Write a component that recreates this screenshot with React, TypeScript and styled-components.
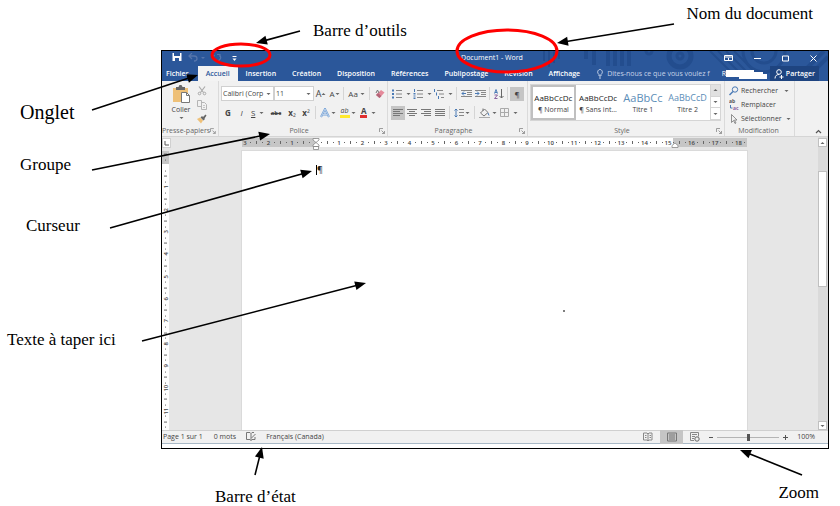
import React from "react";
import styled, { createGlobalStyle } from "styled-components";

const GlobalStyle = createGlobalStyle`
  *, *::before, *::after { box-sizing: border-box; }
  body { margin: 0; background: #fff; font-family: "Open Sans", "Noto Sans", sans-serif; font-size: 7px; line-height: 10px; color: #444; }
  button, select, input { font: inherit; color: inherit; margin: 0; }
`;

const Figure = styled.main`
  position: relative;
  display: grid;
  grid-template-columns: 161px minmax(0, 1fr) 11px;
  grid-template-rows: 50px minmax(0, 1fr) 57px;
  min-width: 840px;
  min-height: 100vh;
  font-family: "Liberation Serif", serif;
  font-size: 17px;
  line-height: 20px;
  color: #000;
`;

const TopLabels = styled.div`
  grid-column: 2;
  display: flex;
  justify-content: space-between;
  align-items: flex-start;
  padding: 4px 16px 0 152px;
`;

const SideLabels = styled.div`
  grid-column: 1;
  grid-row: 2;
  display: flex;
  flex-direction: column;
  align-items: flex-start;
  padding-top: 52px;
`;

const BottomLabels = styled.div`
  grid-column: 2;
  grid-row: 3;
  display: flex;
  align-items: flex-start;
  justify-content: space-between;
  padding: 34px 10px 0 54px;
`;

const Label = styled.span<{ $top?: number; $left?: number; $big?: boolean }>`
  margin-top: ${(p) => p.$top ?? 0}px;
  margin-left: ${(p) => p.$left ?? 0}px;
  font-size: ${(p) => (p.$big ? 20 : 17)}px;
  white-space: nowrap;
`;

const Overlay = styled.svg<{ $right?: boolean }>`
  position: absolute;
  top: 0;
  ${(p) => (p.$right ? "right: 0;" : "left: 0;")}
  pointer-events: none;
`;

const Window = styled.section`
  grid-column: 2;
  grid-row: 2;
  display: flex;
  flex-direction: column;
  border: 1px solid #000;
  padding-bottom: 4px;
  background: #fff;
  font-family: "Open Sans", "Noto Sans", sans-serif;
  font-size: 7px;
  line-height: 10px;
  color: #444;
`;

const Head = styled.header`
  position: relative;
  background: #2b579a;
  color: #fff;
`;

const Pattern = styled.svg`
  position: absolute;
  top: 0;
  right: 0;
`;

const TitleBar = styled.div`
  position: relative;
  display: grid;
  grid-template-columns: 1fr auto 1fr;
  height: 15px;
`;

const TitleSide = styled.div<{ $end?: boolean }>`
  display: flex;
  justify-content: ${(p) => (p.$end ? "flex-end" : "flex-start")};
  padding: ${(p) => (p.$end ? "0 1px 0 0" : "0 0 0 9px")};
`;

const Title = styled.h1`
  margin: 0;
  padding: 2px 6px 0 0;
  font-size: 7px;
  line-height: 10px;
  font-weight: 400;
`;

const IconButton = styled.button<{ $w: number; $on?: boolean }>`
  display: flex;
  align-items: center;
  justify-content: center;
  flex: none;
  width: ${(p) => p.$w}px;
  height: 14px;
  padding: 0;
  border: 0;
  background: ${(p) => (p.$on ? "#c5c5c5" : "transparent")};
  white-space: nowrap;
`;

const Tabs = styled.nav`
  position: relative;
  display: flex;
  height: 15px;
  padding-right: 9px;
`;

const Tab = styled.button<{ $active?: boolean; $first?: boolean }>`
  border: 0;
  padding: ${(p) => (p.$first ? "0 9px 0 4px" : "0 8px")};
  background: ${(p) => (p.$active ? "#f3f3f3" : "transparent")};
  color: ${(p) => (p.$active ? "#2b579a" : "#fff")};
  font-weight: 600;
  white-space: nowrap;
`;

const Search = styled.label`
  display: flex;
  align-items: center;
  gap: 4px;
  flex: 1;
  margin-left: 9px;
  min-width: 0;
`;

const SearchInput = styled.input`
  flex: 1;
  min-width: 0;
  padding: 0;
  border: 0;
  background: transparent;
  &::placeholder { color: #c6d3e8; opacity: 1; }
`;

const Account = styled.span`
  display: flex;
  align-items: center;
  flex: none;
  width: 48px;
`;

const Share = styled.button`
  display: flex;
  align-items: center;
  gap: 2px;
  padding: 0 4px;
  border: 0;
  background: #1e4480;
  font-weight: 600;
`;

const Ribbon = styled.div`
  display: flex;
  height: 56px;
  background: #f1f1f1;
  border-bottom: 1px solid #d5d5d5;
`;

const Group = styled.section<{ $w?: number }>`
  display: flex;
  flex-direction: column;
  justify-content: space-between;
  ${(p) => (p.$w ? `flex: none; width: ${p.$w}px;` : "flex: 1; min-width: 0;")}
  border-right: 1px solid #dadada;
  padding-top: 3px;
`;

const GroupFoot = styled.footer`
  display: flex;
  align-items: center;
  height: 10px;
  padding-right: 2px;
  color: #666;
`;

const GroupName = styled.span`
  flex: 1;
  text-align: center;
  white-space: nowrap;
`;

const Clip = styled.div`
  display: flex;
  padding-left: 6px;
`;

const Paste = styled.button`
  display: flex;
  flex-direction: column;
  align-items: center;
  gap: 1px;
  width: 26px;
  padding: 0;
  border: 0;
  background: transparent;
`;

const Column = styled.div`
  display: flex;
  flex-direction: column;
`;

const Tools = styled.div<{ $pad: number }>`
  display: flex;
  flex-direction: column;
  gap: 4px;
  padding: 2px 0 0 ${(p) => p.$pad}px;
`;

const ToolRow = styled.div`
  display: flex;
  align-items: center;
  height: 15px;
`;

const Divider = styled.i`
  flex: none;
  width: 1px;
  height: 13px;
  margin: 0 2px;
  background: #d5d5d5;
`;

const SelectBox = styled.span<{ $w: number }>`
  display: flex;
  align-items: center;
  flex: none;
  width: ${(p) => p.$w}px;
  height: 15px;
  padding-right: 2px;
  border: 1px solid #d0d0d0;
  background: #fff;
`;

const Select = styled.select`
  appearance: none;
  flex: 1;
  min-width: 0;
  height: 13px;
  padding: 0 0 0 1px;
  border: 0;
  background: transparent;
`;

const Letter = styled.span<{ $bold?: boolean; $italic?: boolean; $under?: boolean; $strike?: boolean; $size?: number; $bar?: string }>`
  font-size: ${(p) => p.$size ?? 8}px;
  font-weight: ${(p) => (p.$bold ? 700 : 400)};
  font-style: ${(p) => (p.$italic ? "italic" : "normal")};
  text-decoration: ${(p) => (p.$under ? "underline" : p.$strike ? "line-through" : "none")};
  ${(p) => (p.$bar ? `line-height: 8px; padding: 0 1px; border-bottom: 3px solid ${p.$bar};` : "")}
`;

const Gallery = styled.div`
  display: flex;
  height: 37px;
  margin: 0 3px 0 2px;
  background: #fff;
  border: 1px solid #d5d5d5;
`;

const StyleCard = styled.button<{ $on?: boolean }>`
  display: flex;
  flex-direction: column;
  align-items: center;
  justify-content: space-between;
  flex: 1;
  min-width: 0;
  padding: 6px 0 3px;
  border: 2px solid ${(p) => (p.$on ? "#c0c0c0" : "transparent")};
  background: transparent;
  white-space: nowrap;
`;

const Sample = styled.span<{ $title?: number }>`
  font-size: ${(p) => p.$title ?? 8}px;
  color: ${(p) => (p.$title ? "#5b8db8" : "#222")};
`;

const GalleryNav = styled.div`
  display: flex;
  flex-direction: column;
  flex: none;
  width: 10px;
  border-left: 1px solid #d5d5d5;
`;

const NavButton = styled.button<{ $dim?: boolean }>`
  flex: 1;
  display: flex;
  align-items: center;
  justify-content: center;
  padding: 0;
  border: 0;
  border-bottom: 1px solid #d5d5d5;
  background: ${(p) => (p.$dim ? "#e1e1e1" : "#fff")};
`;

const EditButton = styled.button`
  display: flex;
  align-items: center;
  gap: 2px;
  height: 14px;
  padding: 0 0 0 4px;
  border: 0;
  background: transparent;
  white-space: nowrap;
`;

const RibbonEnd = styled.div`
  display: flex;
  align-items: flex-end;
  justify-content: flex-end;
  width: 33px;
  padding: 0 6px 1px 0;
`;

const Workspace = styled.div`
  flex: 1;
  display: grid;
  grid-template-columns: 7px minmax(0, 1fr) 10px;
  background: #e6e6e6;
`;

const RulerColumn = styled.div`
  display: flex;
  flex-direction: column;
`;

const TabStop = styled.button`
  display: flex;
  align-items: center;
  justify-content: center;
  flex: none;
  width: 9px;
  height: 10px;
  margin: 1px 0 3px;
  padding: 0;
  border: 1px solid #d0d0d0;
  background: #fff;
`;

const VRuler = styled.div`
  flex: 1;
  display: flex;
  flex-direction: column;
  background: linear-gradient(#c6c6c6 13px, #fff 13px);
`;

const HRuler = styled.div`
  position: relative;
  display: flex;
  height: 9px;
  margin: 1px 0 4px;
  background: linear-gradient(90deg, #c6c6c6 14.6%, #fff 14.6%, #fff 85.3%, #c6c6c6 85.3%);
`;

const Slot = styled.span<{ $vertical?: boolean }>`
  flex: 1 1 0;
  min-width: 0;
  min-height: 0;
  display: flex;
  align-items: center;
  justify-content: center;
  font-size: 6px;
  line-height: 6px;
  font-weight: 600;
  color: #444;
  ${(p) => (p.$vertical ? "writing-mode: vertical-rl; rotate: 180deg;" : "")}
`;

const Mark = styled.i<{ $long?: boolean; $vertical?: boolean }>`
  flex: none;
  width: ${(p) => (p.$vertical && p.$long ? 3 : 1)}px;
  height: ${(p) => (!p.$vertical && p.$long ? 3 : 1)}px;
  background: #666;
`;

const Indent = styled.svg<{ $at: string }>`
  position: absolute;
  top: 0;
  left: ${(p) => p.$at};
`;

const Desk = styled.div`
  display: flex;
  flex-direction: column;
  padding: 0 71px 0 73px;
`;

const Paper = styled.article`
  flex: 1;
  display: grid;
  grid-template-columns: 74px 1fr;
  align-content: start;
  padding-top: 14px;
  background: #fff;
  box-shadow: 0 0 0 1px #dadada;
`;

const Paragraph = styled.p`
  grid-column: 2;
  margin: 0;
  font-size: 9px;
  line-height: 10px;
  color: #222;
  border-left: 1px solid #000;
`;

const Scroll = styled.div`
  display: flex;
  flex-direction: column;
  padding: 1px 1px 0 0;
  background: #dadada;
`;

const ScrollButton = styled.button`
  display: flex;
  align-items: center;
  justify-content: center;
  height: 9px;
  padding: 0;
  border: 1px solid #c0c0c0;
  background: #fff;
`;

const Track = styled.div`
  flex: 1;
  display: grid;
  grid-template-rows: 24fr 116fr 134fr;
`;

const Thumb = styled.div`
  grid-row: 2;
  border: 1px solid #c0c0c0;
  background: #fff;
`;

const StatusBar = styled.footer`
  display: flex;
  align-items: center;
  height: 14px;
  padding: 0 13px 0 1px;
  background: #f1f1f1;
  border-top: 1px solid #d0d0d0;
  border-bottom: 1px solid #a9b9c6;
  white-space: nowrap;
`;

const StatusItem = styled.span<{ $ml?: number }>`
  margin-left: ${(p) => p.$ml ?? 0}px;
`;

const ProofButton = styled(IconButton)`
  margin: 0 5px;
`;

const Spacer = styled.span`
  flex: 1;
`;

const ZoomRange = styled.input`
  appearance: none;
  width: 62px;
  height: 10px;
  background: linear-gradient(#b5b5b5, #b5b5b5) center / 100% 1px no-repeat;
  margin: 0 2px;
  &::-webkit-slider-thumb { appearance: none; width: 3px; height: 7px; background: #555; }
`;

const Caret = ({ up = false }: { up?: boolean }) => (
  <svg width="5" height="4" viewBox="0 0 5 4" aria-hidden="true">
    <path d={up ? "M.5 3h4L2.5 1z" : "M.5 1h4L2.5 3z"} fill="#666" />
  </svg>
);

const Launcher = () => (
  <svg width="6" height="6" viewBox="0 0 6 6" fill="none" stroke="#888" aria-hidden="true">
    <path d="M.5 4V.5H4M2.500 2.500l3 3M5.500 3v2.500H3" strokeWidth=".8" />
  </svg>
);

type GlyphProps = { w?: number; h?: number; children: React.ReactNode };
const Glyph = ({ w = 10, h = 10, children }: GlyphProps) => (
  <svg width={w} height={h} viewBox={`0 0 ${w} ${h}`} fill="none" aria-hidden="true">
    {children}
  </svg>
);

const Lines = ({ d }: { d: string }) => (
  <Glyph>
    <path d={d} stroke="#777" />
  </Glyph>
);

const tabs = ["Insertion", "Création", "Disposition", "Références", "Publipostage", "Révision", "Affichage"];

const slots = (from: number, count: number) =>
  Array.from({ length: count }, (_, i) => {
    const q = from + i;
    if (q === 0) return "";
    if (q % 4 === 0) return String(Math.abs(q / 4));
    return q % 2 === 0 ? "long" : "dot";
  });

const RulerSlots = ({ from, count, vertical }: { from: number; count: number; vertical?: boolean }) => (
  <>
    {slots(from, count).map((s, i) => (
      <Slot key={i} $vertical={vertical}>
        {s === "dot" || s === "long" ? <Mark $long={s === "long"} $vertical={vertical} /> : s}
      </Slot>
    ))}
  </>
);

const ClipboardGroup = () => (
  <Group $w={57}>
    <Clip>
      <Paste>
        <Glyph w={19} h={20}>
          <path d="M1 4h15v14H1z" fill="#eec078" />
          <path d="M4 3h2.500l1-2h2l1 2H13v3H4z" fill="#666" />
          <path d="M9.500 8.500h5l3 3v7h-8z" fill="#fff" stroke="#777" />
          <path d="M14.500 8.500v3h3" stroke="#777" />
        </Glyph>
        <span>Coller</span>
        <Caret />
      </Paste>
      <Column>
        <IconButton $w={16} aria-label="Couper">
          <Glyph>
            <path d="M2 .5l4.500 6M8 .5l-4.500 6" stroke="#aaa" strokeWidth="1.200" />
            <circle cx="2.500" cy="7.500" r="1.300" stroke="#aaa" />
            <circle cx="7.500" cy="7.500" r="1.300" stroke="#aaa" />
          </Glyph>
        </IconButton>
        <IconButton $w={16} aria-label="Copier">
          <Glyph>
            <path d="M.5.5h4v6h-4zM4.500 2.500h3l2 2v5h-5z" fill="#f1f1f1" stroke="#b5b5b5" />
            <path d="M6 5.500h2M6 7.500h2" stroke="#c5c5c5" />
          </Glyph>
        </IconButton>
        <IconButton $w={16} aria-label="Reproduire la mise en forme">
          <Glyph>
            <path d="M0 5l3-1.500 3 3L4 9.500z" fill="#eec078" />
            <path d="M3.500 3.500l3 3 1.500-1.500-3-3zM6 3l2.500-2.500 1 1L7.500 4.500z" fill="#666" />
          </Glyph>
        </IconButton>
      </Column>
    </Clip>
    <GroupFoot>
      <GroupName>Presse-papiers</GroupName>
      <Launcher />
    </GroupFoot>
  </Group>
);

const FontGroup = () => (
  <Group $w={169}>
    <Tools $pad={2}>
      <ToolRow>
        <SelectBox $w={53}>
          <Select aria-label="Police"><option>Calibri (Corp</option></Select>
          <Caret />
        </SelectBox>
        <SelectBox $w={40}>
          <Select aria-label="Taille"><option>11</option></Select>
          <Caret />
        </SelectBox>
        <IconButton $w={14} aria-label="Agrandir"><Letter $size={9}>A</Letter><Caret up /></IconButton>
        <IconButton $w={13} aria-label="Réduire"><Letter>A</Letter><Caret /></IconButton>
        <Divider />
        <IconButton $w={21}><Letter>Aa</Letter>&nbsp;<Caret /></IconButton>
        <Divider />
        <IconButton $w={15} aria-label="Effacer la mise en forme">
          <Glyph>
            <path d="M1 6l5-5 3.500 2.500-5 5.500z" fill="#e58a9b" />
            <path d="M1 6l2-2 3.500 3-2 2z" fill="#b46478" />
            <path d="M1 4l1.500-3L4 4" stroke="#777" />
          </Glyph>
        </IconButton>
      </ToolRow>
      <ToolRow>
        <IconButton $w={14}><Letter $bold>G</Letter></IconButton>
        <IconButton $w={13}><Letter $italic>I</Letter></IconButton>
        <IconButton $w={19}><Letter $under>S</Letter>&nbsp;&nbsp;<Caret /></IconButton>
        <IconButton $w={18}><Letter $strike $bold $size={6}>abc</Letter></IconButton>
        <IconButton $w={14}><Letter $bold>x</Letter><Letter $size={8}>₂</Letter></IconButton>
        <IconButton $w={14}><Letter $bold>x</Letter><Letter $size={8}>²</Letter></IconButton>
        <Divider />
        <IconButton $w={20} aria-label="Effets de texte">
          <Glyph>
            <path d="M1 9L5 1l4 8M3 6.500h4" stroke="#6f9fd8" strokeWidth="2" />
            <path d="M1 9L5 1l4 8M3 6.500h4" stroke="#f1f1f1" strokeWidth=".6" />
          </Glyph>&nbsp;<Caret />
        </IconButton>
        <IconButton $w={20} aria-label="Surlignage">
          <Letter $italic $size={7} $bar="#ffe92e">ab</Letter>&nbsp;<Caret />
        </IconButton>
        <IconButton $w={20} aria-label="Couleur de police"><Letter $bold $bar="#e03030">A</Letter>&nbsp;&nbsp;<Caret /></IconButton>
      </ToolRow>
    </Tools>
    <GroupFoot><GroupName>Police</GroupName><Launcher /></GroupFoot>
  </Group>
);

const listLines = "M4 1.500h6M4 5h6M4 8.500h6";

const ParagraphGroup = () => (
  <Group $w={140}>
    <Tools $pad={3}>
      <ToolRow>
        <IconButton $w={21} aria-label="Puces">
          <Glyph><path d={listLines} stroke="#888" /><path d="M0 1.500h2M0 5h2M0 8.500h2" stroke="#4a7ab5" strokeWidth="2" /></Glyph>&nbsp;&nbsp;<Caret />
        </IconButton>
        <IconButton $w={21} aria-label="Numérotation">
          <Glyph><path d={listLines} stroke="#888" /><path d="M1.500 0v3M.5 4.500h2M.5 6h2M.5 8h2M.5 9.500h2" stroke="#4a7ab5" /></Glyph>&nbsp;&nbsp;<Caret />
        </IconButton>
        <IconButton $w={21} aria-label="Liste à plusieurs niveaux">
          <Glyph><path d="M3 1.500h6M5 5h5M7 8.500h3" stroke="#888" /><path d="M.5 0v3M2.500 3.500v3M4.500 7v3" stroke="#4a7ab5" /></Glyph>&nbsp;&nbsp;<Caret />
        </IconButton>
        <Divider />
        <IconButton $w={14} aria-label="Diminuer le retrait">
          <Glyph w={11}><path d="M0 1.500h11M6 3.500h5M6 5.500h5M0 7.500h11" stroke="#888" /><path d="M5 4.500H1M3 2.500l-2 2 2 2" stroke="#4a7ab5" /></Glyph>
        </IconButton>
        <IconButton $w={14} aria-label="Augmenter le retrait">
          <Glyph w={11}><path d="M0 1.500h11M6 3.500h5M6 5.500h5M0 7.500h11" stroke="#888" /><path d="M0 4.500h4M2 2.500l2 2-2 2" stroke="#4a7ab5" /></Glyph>
        </IconButton>
        <Divider />
        <IconButton $w={13} aria-label="Trier">
          <Glyph><path d="M.5 4.500L2 .5l1.500 4M1 3.500h2" stroke="#4a7ab5" /><path d="M.5 6h3l-3 3.500h3" stroke="#8a62a0" /><path d="M7.500 0v9M5.500 7l2 2 2-2" stroke="#666" /></Glyph>
        </IconButton>
        <Divider />
        <IconButton $w={14} $on><Letter>¶</Letter></IconButton>
      </ToolRow>
      <ToolRow>
        <IconButton $w={14} $on aria-label="Aligner à gauche"><Lines d="M0 1.500h10M0 3.500h7M0 5.500h10M0 7.500h7" /></IconButton>
        <IconButton $w={14} aria-label="Centrer"><Lines d="M0 1.500h10M2 3.500h6M0 5.500h10M2 7.500h6" /></IconButton>
        <IconButton $w={14} aria-label="Aligner à droite"><Lines d="M0 1.500h10M3 3.500h7M0 5.500h10M3 7.500h7" /></IconButton>
        <IconButton $w={14} aria-label="Justifier"><Lines d="M0 1.500h10M0 3.500h10M0 5.500h10M0 7.500h10" /></IconButton>
        <Divider />
        <IconButton $w={20} aria-label="Interligne">
          <Glyph><path d="M5 1.500h5M5 4.500h5M5 7.500h5" stroke="#888" /><path d="M2 1v8M.5 2.500L2 1l1.500 1.500M.5 7.500L2 9l1.500-1.500" stroke="#4a7ab5" /></Glyph>&nbsp;<Caret />
        </IconButton>
        <Divider />
        <IconButton $w={22} aria-label="Trame de fond">
          <Glyph w={11}><path d="M1.500 5l4-4 3.500 3.500-4 3.500zM4 3V.5" stroke="#777" /><path d="M9 5l1 2.500" stroke="#4a7ab5" /><path d="M0 9.500h11" stroke="#aaa" /></Glyph>&nbsp;<Caret />
        </IconButton>
        <IconButton $w={20} aria-label="Bordures">
          <Glyph><path d="M.5.5h8v8h-8zM4.500.5v8M.5 4.500h8" stroke="#aaa" /></Glyph>&nbsp;&nbsp;<Caret />
        </IconButton>
      </ToolRow>
    </Tools>
    <GroupFoot><GroupName>Paragraphe</GroupName><Launcher /></GroupFoot>
  </Group>
);

const StyleGroup = () => (
  <Group>
    <Gallery>
      <StyleCard $on><Sample>AaBbCcDc</Sample><span>¶ Normal</span></StyleCard>
      <StyleCard><Sample>AaBbCcDc</Sample><span>¶ Sans int...</span></StyleCard>
      <StyleCard><Sample $title={11}>AaBbCc</Sample><span>Titre 1</span></StyleCard>
      <StyleCard><Sample $title={9}>AaBbCcD</Sample><span>Titre 2</span></StyleCard>
      <GalleryNav>
        <NavButton $dim aria-label="Précédent"><Caret up /></NavButton>
        <NavButton aria-label="Suivant"><Caret /></NavButton>
        <NavButton aria-label="Autres"><Caret /></NavButton>
      </GalleryNav>
    </Gallery>
    <GroupFoot><GroupName>Style</GroupName><Launcher /></GroupFoot>
  </Group>
);

const EditGroup = () => (
  <Group $w={70}>
    <Column>
      <EditButton>
        <Glyph><circle cx="6" cy="3.500" r="2.700" stroke="#4a7ab5" /><path d="M4 5.500L.5 9" stroke="#4a7ab5" strokeWidth="1.500" /></Glyph>
        Rechercher&nbsp;&nbsp;<Caret />
      </EditButton>
      <EditButton>
        <Glyph h={12}>
          <text x="0" y="4" fontSize="5" fill="#555" fontWeight="700">ab</text>
          <text x="4" y="11" fontSize="5" fill="#8a62a0" fontWeight="700">ac</text>
          <path d="M1.500 6v3H3.500" stroke="#4a7ab5" />
        </Glyph>
        Remplacer
      </EditButton>
      <EditButton>
        <Glyph><path d="M2.500.5v8l2-2 1.500 3 1-.5-1.500-3h2.500z" stroke="#777" strokeWidth=".8" /></Glyph>
        Sélectionner&nbsp;<Caret />
      </EditButton>
    </Column>
    <GroupFoot><GroupName>Modification</GroupName></GroupFoot>
  </Group>
);

const WordHead = () => (
  <Head>
    <Pattern width="330" height="30" viewBox="0 0 330 30" fill="none" stroke="#234d8e" aria-hidden="true">
      <path d="M46 0v10M51 0v16M56 0v12M61 0v8" strokeWidth="2" />
      <path d="M88 0v8M96 0v14M110 0v15M117 0v15M124 0v15M131 0v15" strokeWidth="4" />
      <circle cx="182" cy="5" r="11" strokeWidth="5" />
      <circle cx="182" cy="5" r="3" strokeWidth="3" />
      <circle cx="151" cy="0" r="3" strokeWidth="3" />
      <path d="M212 0l26 26M220 0l26 26M228 0l26 26M236 0l26 26" strokeWidth="2" />
      <circle cx="266" cy="0" r="21" strokeWidth="3" />
      <circle cx="266" cy="0" r="12" strokeWidth="3" />
      <path d="M300 26L326 0M310 26L330 6" strokeWidth="4" />
    </Pattern>
    <TitleBar>
      <TitleSide>
        <IconButton $w={12} aria-label="Enregistrer">
          <Glyph><path d="M.5-1h9v9h-9z" fill="#fff" /><path d="M2 0h6v3H2zM3 5h4v3H3z" fill="#2b579a" /></Glyph>
        </IconButton>
        <IconButton $w={26} aria-label="Annuler">
          <Glyph><path d="M1 3h5c4 0 4 5 0 5M4 0L1 3l3 3" stroke="#5575ac" strokeWidth="1.300" /></Glyph>
          <Glyph w={7} h={3}><path d="M3 0h4L5 2z" fill="#5575ac" /></Glyph>
        </IconButton>
        <IconButton $w={16} aria-label="Rétablir">
          <Glyph><path d="M7.500 2a3.500 3.500 0 1 1-5 0M5 1.500h3V4" stroke="#5575ac" strokeWidth="1.200" /></Glyph>
        </IconButton>
        <IconButton $w={18} aria-label="Personnaliser">
          <Glyph w={5} h={8}><path d="M.5 2.500h4" stroke="#fff" /><path d="M.5 4.500h4L2.500 7z" fill="#fff" /></Glyph>
        </IconButton>
      </TitleSide>
      <Title>Document1 - Word</Title>
      <TitleSide $end>
        <IconButton $w={29} aria-label="Options du ruban">
          <Glyph h={8}><path d="M.5 1.500h8v5h-8zM.5 3h8M4.500 6V4" stroke="#fff" /></Glyph>
        </IconButton>
        <IconButton $w={28} aria-label="Réduire"><Glyph w={7} h={5}><path d="M0 2.500h7" stroke="#fff" /></Glyph></IconButton>
        <IconButton $w={28} aria-label="Agrandir"><Glyph w={7} h={7}><path d="M.5 1h6v5h-6z" stroke="#fff" /></Glyph></IconButton>
        <IconButton $w={28} aria-label="Fermer"><Glyph w={7} h={7}><path d="M.5.5l6 6M6.500.5l-6 6" stroke="#fff" /></Glyph></IconButton>
      </TitleSide>
    </TitleBar>
    <Tabs>
      <Tab $first>Fichier</Tab>
      <Tab $active>Accueil</Tab>
      {tabs.map((t) => <Tab key={t}>{t}</Tab>)}
      <Search>
        <Glyph w={6}><path d="M2 7V5.500C-.5 3.500 1 .5 3 .5s3.500 3 1 5V7zM2 9h2" stroke="#d5dff0" strokeWidth=".9" /></Glyph>
        <SearchInput aria-label="Rechercher une commande" placeholder="Dites-nous ce que vous voulez f" />
      </Search>
      <Account>
        R
        <Glyph w={41}><path d="M0 1h28v2h9v2h4v5H13V8H0z" fill="#fff" /></Glyph>
      </Account>
      <Share>
        <Glyph><circle cx="5" cy="3" r="2.300" stroke="#fff" /><path d="M1 9.500c0-3 2-4 4-4M5.500 8h4M7.500 6v4" stroke="#fff" /></Glyph>
        Partager
      </Share>
    </Tabs>
  </Head>
);

const Status = () => (
  <StatusBar>
    <StatusItem>Page 1 sur 1</StatusItem>
    <StatusItem $ml={11}>0 mots</StatusItem>
    <ProofButton $w={20} aria-label="Vérification">
      <Glyph><path d="M.5.5H4l1 1v7l-1-1H.5zM5 1.500l1-1h2M5 8.500l1-1h3V5M5.500 6l4-4" stroke="#777" /></Glyph>
    </ProofButton>
    <StatusItem>Français (Canada)</StatusItem>
    <Spacer />
    <IconButton $w={24} aria-label="Mode lecture">
      <Glyph><path d="M.5 1h3.500l1 1 1-1h3v7H6L5 9 4 8H.5zM5 2v7M2 3.500h1.500M2 5.500h1.500M6.500 3.500H8M6.500 5.500H8" stroke="#888" /></Glyph>
    </IconButton>
    <IconButton $w={23} $on aria-label="Page">
      <Glyph><path d="M.5 1h9v8h-9zM2 3h6M2 5h6M2 7h6" stroke="#777" /></Glyph>
    </IconButton>
    <IconButton $w={24} aria-label="Web">
      <Glyph><path d="M.5.5h8v4M.5.5v8H4M2 2.500h5M2 4.500h3M2 6.500h2" stroke="#888" /><circle cx="7" cy="7" r="2.200" stroke="#666" /></Glyph>
    </IconButton>
    <IconButton $w={8} aria-label="Zoom arrière"><Glyph w={5} h={5}><path d="M0 2.500h4" stroke="#555" /></Glyph></IconButton>
    <ZoomRange type="range" aria-label="Zoom" min={0} max={100} defaultValue={50} />
    <IconButton $w={8} aria-label="Zoom avant"><Glyph w={5} h={5}><path d="M0 2.500h5M2.500 0v5" stroke="#555" /></Glyph></IconButton>
    <StatusItem $ml={8}>100%</StatusItem>
  </StatusBar>
);

const Arrow = ({ x1, y1, x2, y2 }: { x1: number; y1: number; x2: number; y2: number }) => {
  const a = Math.atan2(y2 - y1, x2 - x1);
  const px = (d: number, s: number) =>
    `${x2 - d * Math.cos(a) - s * Math.sin(a)},${y2 - d * Math.sin(a) + s * Math.cos(a)}`;
  return (
    <g>
      <path d={`M${x1} ${y1}L${px(8, 0)}`} stroke="#000" strokeWidth="1.600" />
      <polygon points={`${x2},${y2} ${px(11, 4.5)} ${px(11, -4.5)}`} fill="#000" />
    </g>
  );
};

export default function App() {
  return (
    <Figure>
      <GlobalStyle />
      <TopLabels>
        <Label $top={17}>Barre d’outils</Label>
        <Label>Nom du document</Label>
      </TopLabels>
      <SideLabels>
        <Label $left={20} $big>Onglet</Label>
        <Label $left={20} $top={33}>Groupe</Label>
        <Label $left={26} $top={41}>Curseur</Label>
        <Label $left={7} $top={94}>Texte à taper ici</Label>
      </SideLabels>
      <Window>
        <WordHead />
        <Ribbon>
          <ClipboardGroup />
          <FontGroup />
          <ParagraphGroup />
          <StyleGroup />
          <EditGroup />
          <RibbonEnd><Glyph w={7} h={7}><path d="M1 5l2.500-2.500L6 5" stroke="#555" strokeWidth="1.200" /></Glyph></RibbonEnd>
        </Ribbon>
        <Workspace>
          <RulerColumn>
            <TabStop aria-label="Tabulation"><Glyph w={5} h={5}><path d="M1 0v4h4" stroke="#555" /></Glyph></TabStop>
            <VRuler><RulerSlots from={-2} count={50} vertical /></VRuler>
          </RulerColumn>
          <Desk>
            <HRuler>
              <RulerSlots from={-12} count={86} />
              <Indent $at="70px" width="9" height="12" viewBox="0 0 9 12" fill="#fff" stroke="#888">
                <path d="M1 .5h6v1.500L4 4.500 1 2zM4 4.500L7 7v1.500H1V7zM1.500 8.500h5v3h-5z" strokeWidth=".8" />
              </Indent>
              <Indent $at="85%" width="8" height="12" viewBox="0 0 8 12" fill="#fff" stroke="#888">
                <path d="M4 5l3 2.500V9.500H1v-2z" strokeWidth=".8" />
              </Indent>
            </HRuler>
            <Paper><Paragraph>¶</Paragraph></Paper>
          </Desk>
          <Scroll>
            <ScrollButton aria-label="Haut"><Caret up /></ScrollButton>
            <Track><Thumb /></Track>
            <ScrollButton aria-label="Bas"><Caret /></ScrollButton>
          </Scroll>
        </Workspace>
        <Status />
      </Window>
      <BottomLabels>
        <Label $top={4}>Barre d’état</Label>
        <Label>Zoom</Label>
      </BottomLabels>
      <Overlay width="420" height="506" fill="none">
        <ellipse cx="241" cy="55" rx="29" ry="11" stroke="#f00" strokeWidth="3" />
        <Arrow x1={300} y1={31} x2={256} y2={43} />
        <Arrow x1={92} y1={110} x2={198} y2={75} />
        <Arrow x1={92} y1={170} x2={270} y2={134} />
        <Arrow x1={110} y1={228} x2={312} y2={171} />
        <Arrow x1={142} y1={341} x2={366} y2={283} />
        <Arrow x1={255} y1={475} x2={262} y2={447} />
      </Overlay>
      <Overlay $right width="420" height="506" fill="none">
        <ellipse cx="87" cy="51" rx="50" ry="21" stroke="#f00" strokeWidth="3" />
        <Arrow x1={254} y1={24} x2={137} y2={43} />
        <Arrow x1={382} y1={475} x2={320} y2={450} />
        <circle cx="144" cy="311" r="1" fill="#555" />
      </Overlay>
    </Figure>
  );
}
